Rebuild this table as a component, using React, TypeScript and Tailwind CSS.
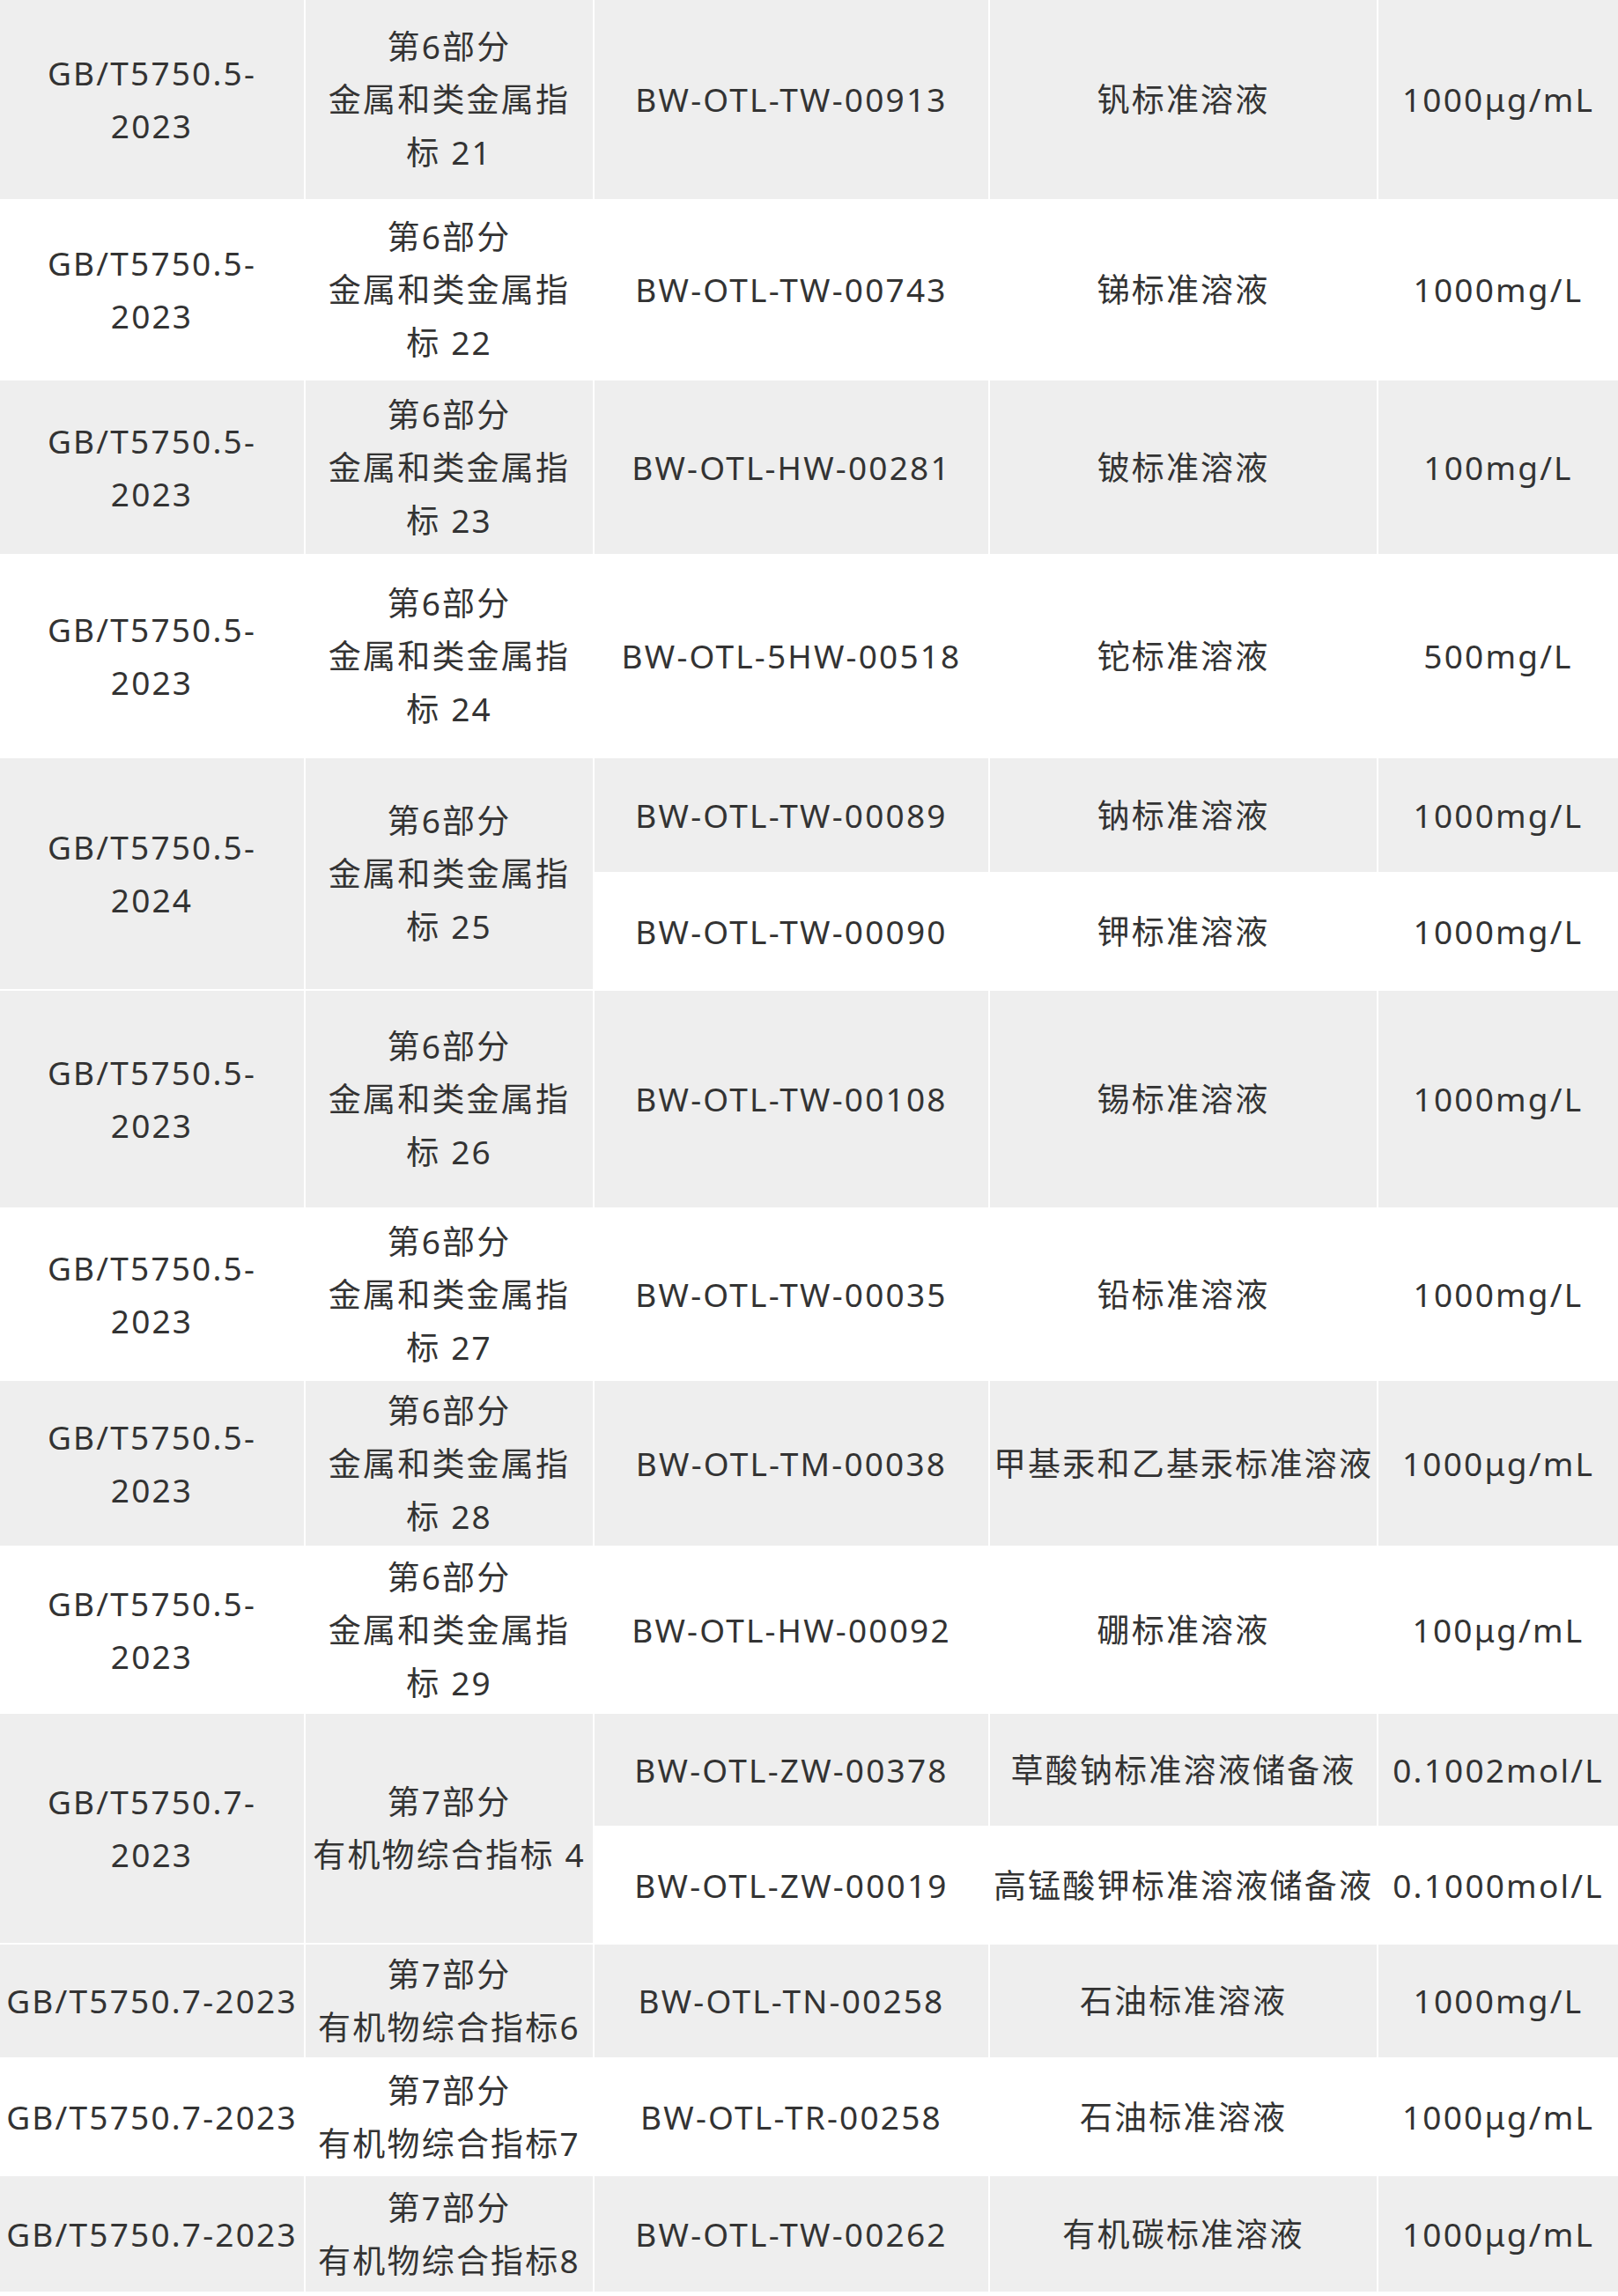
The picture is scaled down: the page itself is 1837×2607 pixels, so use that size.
import React from "react";

type Sub = { code: string; name: string; conc: string };
type Row = { std: string; part: string; h: number[]; items: Sub[] };

const rows: Row[] = [
  { std: "GB/T5750.5-\n2023", part: "第6部分\n金属和类金属指\n标 21", h: [228], items: [{ code: "BW-OTL-TW-00913", name: "钒标准溶液", conc: "1000μg/mL" }] },
  { std: "GB/T5750.5-\n2023", part: "第6部分\n金属和类金属指\n标 22", h: [204], items: [{ code: "BW-OTL-TW-00743", name: "锑标准溶液", conc: "1000mg/L" }] },
  { std: "GB/T5750.5-\n2023", part: "第6部分\n金属和类金属指\n标 23", h: [199], items: [{ code: "BW-OTL-HW-00281", name: "铍标准溶液", conc: "100mg/L" }] },
  { std: "GB/T5750.5-\n2023", part: "第6部分\n金属和类金属指\n标 24", h: [230], items: [{ code: "BW-OTL-5HW-00518", name: "铊标准溶液", conc: "500mg/L" }] },
  {
    std: "GB/T5750.5-\n2024",
    part: "第6部分\n金属和类金属指\n标 25",
    h: [131, 133],
    items: [
      { code: "BW-OTL-TW-00089", name: "钠标准溶液", conc: "1000mg/L" },
      { code: "BW-OTL-TW-00090", name: "钾标准溶液", conc: "1000mg/L" },
    ],
  },
  { std: "GB/T5750.5-\n2023", part: "第6部分\n金属和类金属指\n标 26", h: [248], items: [{ code: "BW-OTL-TW-00108", name: "锡标准溶液", conc: "1000mg/L" }] },
  { std: "GB/T5750.5-\n2023", part: "第6部分\n金属和类金属指\n标 27", h: [195], items: [{ code: "BW-OTL-TW-00035", name: "铅标准溶液", conc: "1000mg/L" }] },
  { std: "GB/T5750.5-\n2023", part: "第6部分\n金属和类金属指\n标 28", h: [189], items: [{ code: "BW-OTL-TM-00038", name: "甲基汞和乙基汞标准溶液", conc: "1000μg/mL" }] },
  { std: "GB/T5750.5-\n2023", part: "第6部分\n金属和类金属指\n标 29", h: [189], items: [{ code: "BW-OTL-HW-00092", name: "硼标准溶液", conc: "100μg/mL" }] },
  {
    std: "GB/T5750.7-\n2023",
    part: "第7部分\n有机物综合指标 4",
    h: [129, 133],
    items: [
      { code: "BW-OTL-ZW-00378", name: "草酸钠标准溶液储备液", conc: "0.1002mol/L" },
      { code: "BW-OTL-ZW-00019", name: "高锰酸钾标准溶液储备液", conc: "0.1000mol/L" },
    ],
  },
  { std: "GB/T5750.7-2023", part: "第7部分\n有机物综合指标6", h: [130], items: [{ code: "BW-OTL-TN-00258", name: "石油标准溶液", conc: "1000mg/L" }] },
  { std: "GB/T5750.7-2023", part: "第7部分\n有机物综合指标7", h: [133], items: [{ code: "BW-OTL-TR-00258", name: "石油标准溶液", conc: "1000μg/mL" }] },
  { std: "GB/T5750.7-2023", part: "第7部分\n有机物综合指标8", h: [133], items: [{ code: "BW-OTL-TW-00262", name: "有机碳标准溶液", conc: "1000μg/mL" }] },
];

const cell = "p-0 text-center align-middle whitespace-pre border-b-2 border-white";

export default function App() {
  let stripe = 0;

  return (
    <div className="w-[1837px] bg-white font-['Noto_Sans','Noto_Sans_CJK_SC',sans-serif] text-[37px] leading-[60px] tracking-[2.2px] text-[#333333]">
      <table className="w-full table-fixed border-separate border-spacing-0">
        <colgroup>
          <col className="w-[347px]" />
          <col className="w-[328px]" />
          <col className="w-[449px]" />
          <col className="w-[441px]" />
          <col className="w-[272px]" />
        </colgroup>
        <tbody>
          {rows.map((row, ri) =>
            row.items.map((item, ii) => {
              const bg = stripe++ % 2 === 0 ? "bg-[#eeeeee]" : "bg-white";
              const h = row.h[ii];
              return (
                <tr key={`${ri}-${ii}`} style={{ height: h }}>
                  {ii === 0 && (
                    <>
                      <td rowSpan={row.items.length} className={`${cell} ${bg} border-r-2`}>
                        {row.std}
                      </td>
                      <td rowSpan={row.items.length} className={`${cell} ${bg} border-r-2`}>
                        {row.part}
                      </td>
                    </>
                  )}
                  <td className={`${cell} ${bg} border-r-2`}>{item.code}</td>
                  <td className={`${cell} ${bg} border-r-2`}>{item.name}</td>
                  <td className={`${cell} ${bg}`}>{item.conc}</td>
                </tr>
              );
            })
          )}
        </tbody>
      </table>
    </div>
  );
}
